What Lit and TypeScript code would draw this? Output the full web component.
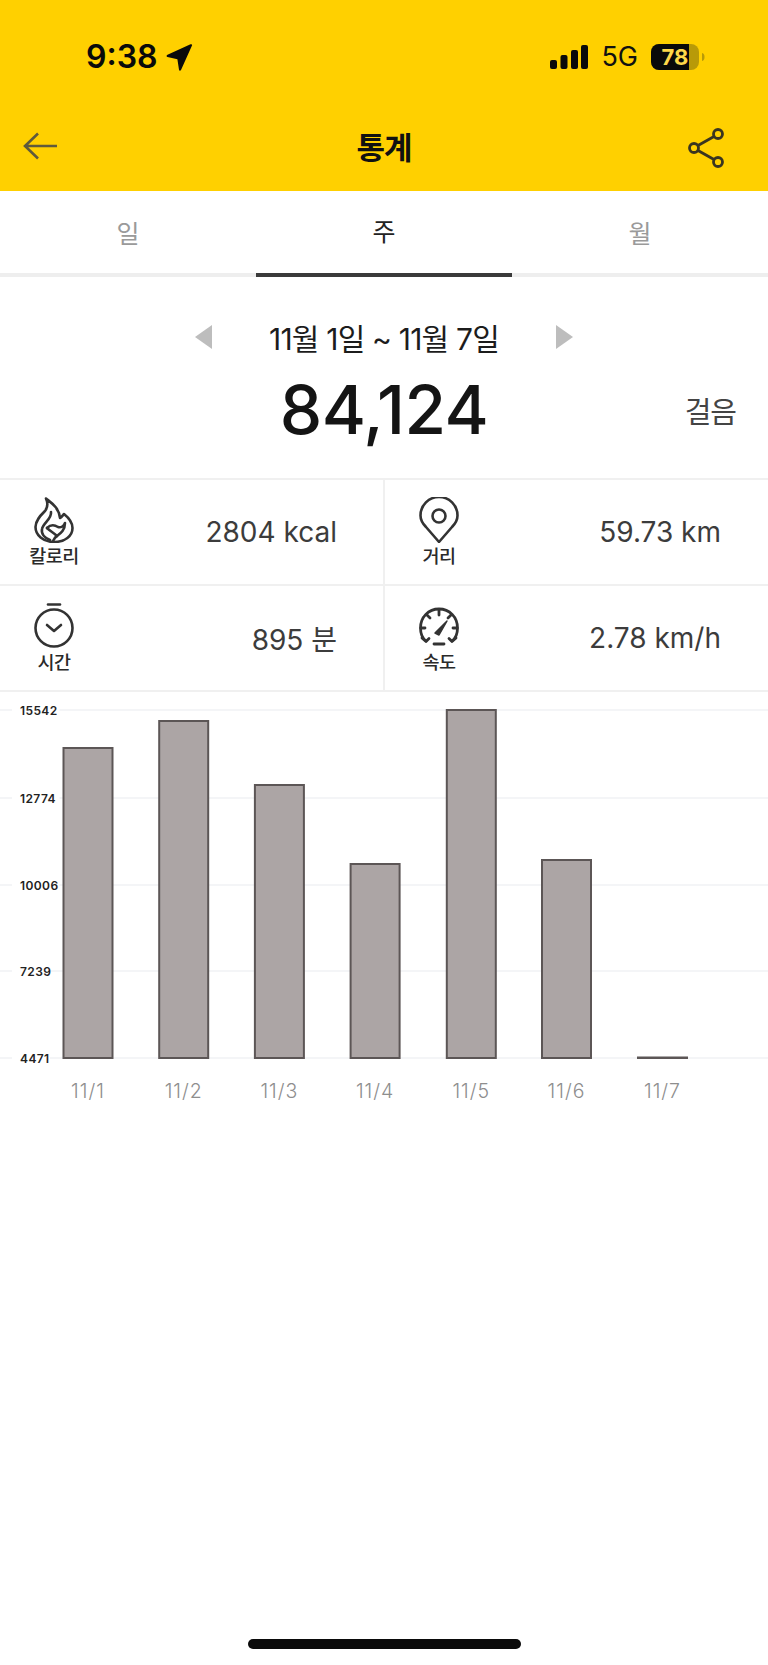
import { LitElement, html, css, svg } from "lit";
import { customElement } from "lit/decorators.js";

const BASE = 1058;
const bars = [
  { x: 63.5, top: 748, label: "11/1" },
  { x: 159.2, top: 721, label: "11/2" },
  { x: 254.9, top: 785, label: "11/3" },
  { x: 350.6, top: 864, label: "11/4" },
  { x: 446.8, top: 710, label: "11/5" },
  { x: 542, top: 860, label: "11/6" },
  { x: 638, top: 1057.5, label: "11/7" },
];
const ticks = [
  { y: 710, v: "15542" },
  { y: 798, v: "12774" },
  { y: 885, v: "10006" },
  { y: 971, v: "7239" },
  { y: 1058, v: "4471" },
];

const flame = html`<svg class="ico" viewBox="0 0 40 46" fill="none" stroke="#333" stroke-width="2.600" stroke-linejoin="round" stroke-linecap="round">
  <path d="M12 1.500C16 5 25 10 26 21c2-1 3-3 4-4 5 4 8.500 8 8.500 14C38.500 39 31 45 20 45 9 45 1.500 38 1.500 30 1.500 23 7 18 11 14c3-4 3-8 1-12.500Z"/>
  <path d="M17 15c1 7-8 11-9 17-1 5 3 9 8 11"/>
  <path d="M13 31c4-4 8-3 11-1 3 1 6-1 7-4 0 7-4 10-8 13-2 1-3 3-4 5"/>
  <path d="M13 31c3 3 7 5 10 8"/>
</svg>`;
const pin = html`<svg class="ico" viewBox="0 0 40 46" fill="none" stroke="#333" stroke-width="2.600" stroke-linejoin="round">
  <path d="M20 45 7 30C3 26 1.500 22 1.500 18.500a18.500 18.500 0 0 1 37 0c0 3.500-1.500 7.500-5.500 11.500Z"/>
  <circle cx="20" cy="19" r="6.500"/>
</svg>`;
const timer = html`<svg class="ico" viewBox="0 0 40 46" fill="none" stroke="#333" stroke-width="2.600" stroke-linecap="round" stroke-linejoin="round">
  <path d="M14 1.500h12"/>
  <circle cx="20" cy="25" r="18.500"/>
  <path d="m13 22 7 6 7-6"/>
</svg>`;
const gauge = html`<svg class="ico" viewBox="0 0 40 46" fill="none" stroke="#333" stroke-width="2.800" stroke-linecap="round" stroke-linejoin="round">
  <path d="M7 38C3 35 1.500 31 1.500 25 1.500 14 9.500 6 20 6s18.500 8 18.500 19c0 6-1.500 10-5.500 13"/>
  <path d="M3 35l4 3.500 3-3M37 35l-4 3.500-3-3"/>
  <path d="M20 7v5M8 12l3 3M32 12l-3 3M2 25h4M34 25h4M15 41h10"/>
  <path d="M16 30 28 18l-8 14Z" fill="#333" stroke-width="1.500"/>
</svg>`;

@customElement("app-root")
export class AppRoot extends LitElement {
  static styles = css`
    :host {
      display: block;
      width: 768px;
      height: 1665px;
      background: #fff;
      position: relative;
      overflow: hidden;
      font-family: Inter, "Noto Sans CJK KR", "Noto Sans", sans-serif;
      color: #333;
    }
    .top {
      background: #ffd000;
      height: 191px;
      display: flex;
      flex-direction: column;
    }
    .status {
      height: 100px;
      padding: 40px 63px 0 86px;
      box-sizing: border-box;
      display: flex;
      align-items: flex-start;
      justify-content: space-between;
    }
    .time {
      display: flex;
      align-items: center;
      gap: 8px;
      font-size: 32px;
      line-height: 34px;
      font-weight: 600;
      color: #0a0a0a;
    }
    .sys {
      display: flex;
      align-items: center;
      gap: 13px;
      height: 34px;
    }
    .net {
      font-size: 27px;
      font-weight: 400;
      color: #111;
      line-height: 34px;
    }
    .nav {
      flex: 1;
      display: grid;
      grid-template-columns: 1fr auto 1fr;
      align-items: center;
      padding: 0 23px;
    }
    .nav h1 {
      margin: 0;
      font-size: 31px;
      font-weight: 700;
      color: #111;
      letter-spacing: -1px;
    }
    .nav .share {
      justify-self: end;
      margin: 4px 21px 0 0;
    }
    .tabs {
      display: flex;
      height: 86px;
      border-bottom: 4px solid #eee;
      box-sizing: border-box;
    }
    .tab {
      flex: 1;
      display: flex;
      align-items: center;
      justify-content: center;
      font-size: 25px;
      color: #9a9a9a;
      margin-bottom: -4px;
      padding-bottom: 5px;
      box-sizing: border-box;
    }
    .tab.on {
      color: #222;
      border-bottom: 4px solid #3a3a3a;
    }
    .date {
      display: flex;
      align-items: center;
      justify-content: center;
      gap: 56px;
      margin-top: 39px;
      height: 42px;
    }
    .date span {
      font-size: 30px;
      color: #1c1c1c;
      letter-spacing: -0.8px;
      width: 232px;
      white-space: nowrap;
      display: flex;
      justify-content: center;
    }
    .tri {
      width: 0;
      height: 0;
      border-top: 12px solid transparent;
      border-bottom: 12px solid transparent;
    }
    .tri.l { border-right: 17px solid #bdbdbd; }
    .tri.r { border-left: 17px solid #bdbdbd; }
    .total {
      display: grid;
      grid-template-columns: 1fr auto 1fr;
      align-items: center;
      height: 78px;
      margin-top: 13px;
    }
    .big {
      grid-column: 2;
      font-size: 67.5px;
      font-weight: 500;
      color: #141414;
      line-height: 78px;
      letter-spacing: -0.6px;
    }
    .unit {
      grid-column: 3;
      justify-self: end;
      margin-right: 32px;
      font-size: 29px;
      color: #444;
      letter-spacing: -1px;
    }
    .stats {
      margin-top: 29px;
      display: grid;
      grid-template-columns: 385px 383px;
      border-top: 2px solid #f0f0f0;
    }
    .cell {
      height: 106px;
      box-sizing: border-box;
      border-bottom: 2px solid #f0f0f0;
      display: flex;
      align-items: center;
      justify-content: space-between;
      padding: 0 47px 0 29px;
    }
    .cell:nth-child(odd) {
      border-right: 2px solid #f0f0f0;
      padding-right: 46px;
    }
    .meta {
      width: 50px;
      display: flex;
      flex-direction: column;
      align-items: center;
      gap: 2px;
    }
    .ico {
      width: 40px;
      height: 46px;
      display: block;
    }
    .meta b {
      font-size: 18.5px;
      line-height: 22px;
      font-weight: 500;
      color: #2a2a2a;
      letter-spacing: -0.5px;
      white-space: nowrap;
    }
    .val {
      font-size: 28px;
      font-weight: 400;
      color: #3c3c3c;
      letter-spacing: 0;
    }
    .chart {
      display: block;
      width: 768px;
      height: 420px;
    }
    .chart .grid { stroke: #f1f2f5; stroke-width: 1.500; }
    .chart .bar { fill: #aca5a5; stroke: #5c5656; stroke-width: 2; }
    .chart .y { font-size: 12px; font-weight: 600; fill: #222; letter-spacing: 0.4px; }
    .chart .x { font-size: 19.500px; fill: #8e8e8e; text-anchor: middle; font-weight: 300; letter-spacing: 1px; }
    .home {
      position: absolute;
      left: 248px;
      top: 1639px;
      width: 273px;
      height: 10px;
      border-radius: 5px;
      background: #0a0a0a;
    }
  `;

  render() {
    const off = 692;
    return html`
      <div class="top">
        <div class="status">
          <div class="time">
            9:38
            <svg width="27" height="27" viewBox="0 0 27 27"><path d="M26 1.500 15 26c-.5 1-1.800 1-2-.2l-1.600-10.500L1.500 13c-1.200-.3-1.200-1.800 0-2.200L24.500.3c1-.4 1.900.3 1.500 1.200Z" fill="#0a0a0a"/></svg>
          </div>
          <div class="sys">
            <svg width="38" height="24" viewBox="0 0 38 24" fill="#0a0a0a">
              <rect x="0" y="15" width="7" height="9" rx="2"/>
              <rect x="10.500" y="10" width="7" height="14" rx="2"/>
              <rect x="21" y="5" width="7" height="19" rx="2"/>
              <rect x="31" y="0" width="7" height="24" rx="2"/>
            </svg>
            <span class="net">5G</span>
            <svg width="54" height="28" viewBox="0 0 54 28">
              <rect x="0" y="1" width="48" height="26" rx="8" fill="#b89a08"/>
              <path d="M8 1h30v26H8a8 8 0 0 1-8-8V9a8 8 0 0 1 8-8Z" fill="#0a0a0a"/>
              <path d="M51 10c2 .5 2.500 2 2.500 4s-.5 3.500-2.500 4Z" fill="#b89a08"/>
              <text x="24" y="22" text-anchor="middle" font-size="22" font-weight="700" fill="#ffd84a" font-family="Inter, sans-serif">78</text>
            </svg>
          </div>
        </div>
        <div class="nav">
          <svg width="34" height="28" viewBox="0 0 34 28" fill="none" stroke="#5f5a3c" stroke-width="2.600"><path d="M34 14H2M15 1.500 2 14l13 12.500"/></svg>
          <h1>통계</h1>
          <svg class="share" width="36" height="40" viewBox="0 0 36 40" fill="none" stroke="#3a3520" stroke-width="2.800">
            <circle cx="6" cy="20" r="4.500"/><circle cx="30" cy="6" r="4.500"/><circle cx="30" cy="34" r="4.500"/>
            <path d="m10 17.500 16-9M10 22.500l16 9"/>
          </svg>
        </div>
      </div>
      <div class="tabs">
        <div class="tab">일</div>
        <div class="tab on">주</div>
        <div class="tab">월</div>
      </div>
      <div class="date">
        <i class="tri l"></i>
        <span>11월 1일 ~ 11월 7일</span>
        <i class="tri r"></i>
      </div>
      <div class="total">
        <div class="big">84,124</div>
        <div class="unit">걸음</div>
      </div>
      <div class="stats">
        <div class="cell"><div class="meta">${flame}<b>칼로리</b></div><div class="val">2804 kcal</div></div>
        <div class="cell"><div class="meta">${pin}<b>거리</b></div><div class="val">59.73 km</div></div>
        <div class="cell"><div class="meta">${timer}<b>시간</b></div><div class="val">895 분</div></div>
        <div class="cell"><div class="meta">${gauge}<b>속도</b></div><div class="val">2.78 km/h</div></div>
      </div>
      <svg class="chart" viewBox="0 ${off} 768 420">
        ${ticks.map(
          (t) => svg`<line class="grid" x1="0" x2="768" y1=${t.y} y2=${t.y}></line>`
        )}
        ${ticks.map(
          (t) => svg`<rect x="12" y=${t.y - 8} width=${t.v.length * 9.5} height="16" fill="#fff"></rect><text class="y" x="20" y=${t.y + 4.5}>${t.v}</text>`
        )}
        ${bars.map(
          (b) => svg`<rect class="bar" x=${b.x} y=${b.top} width="49" height=${BASE - b.top}></rect>`
        )}
        ${bars.map(
          (b) => svg`<text class="x" x=${b.x + 24.5} y="1098">${b.label}</text>`
        )}
      </svg>
      <div class="home"></div>
    `;
  }
}
